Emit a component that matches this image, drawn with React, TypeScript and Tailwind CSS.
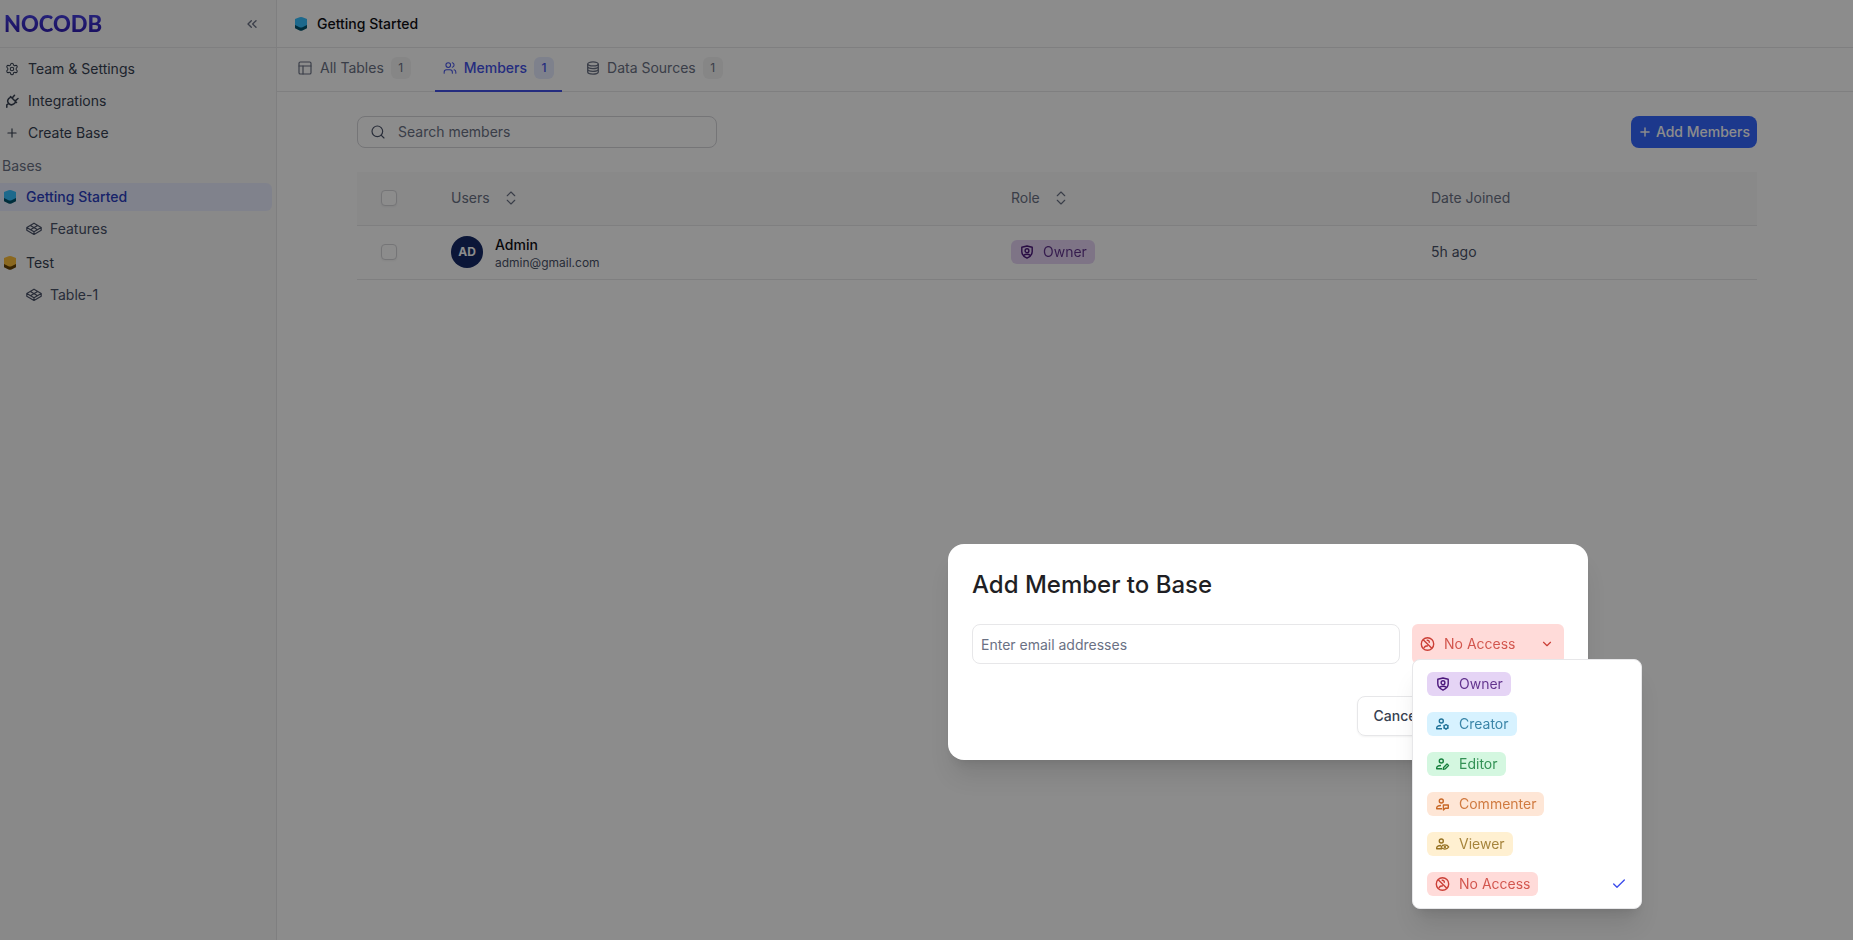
import { useState, type ReactNode } from "react";
import {
  Check,
  ChevronDown,
  ChevronsLeft,
  ChevronsUpDown,
  PanelsTopLeft,
  Plus,
  Search,
  Settings,
  Users,
} from "lucide-react";

type Role = "Owner" | "Creator" | "Editor" | "Commenter" | "Viewer" | "No Access";

const person = (
  <>
    <circle cx="6.3" cy="5" r="2" />
    <path d="M7 12.8H1.700v-.8c0-1.500 2-2.400 4.300-2.500" />
  </>
);

const roleIcons: Record<Role, ReactNode> = {
  Owner: (
    <>
      <path d="M2.800 3.200 8 2l5.200 1.200v4.600c0 3-2.200 5-5.200 6.300-3-1.300-5.200-3.300-5.200-6.300z" />
      <circle cx="8" cy="6.700" r="1.900" />
      <path d="M4.500 11.300c2-1.200 5-1.200 7 0" />
    </>
  ),
  Creator: (
    <>
      {person}
      <circle cx="11" cy="10.800" r="1.900" />
      <path d="M11 7.900v1M11 12.700v1M8.500 9.300l.900.500M12.600 11.800l.900.500M8.500 12.300l.900-.500M12.600 9.800l.900-.500" />
    </>
  ),
  Editor: (
    <>
      {person}
      <path d="m8.200 13.300.4-1.900 3.400-3.300 1.500 1.500-3.400 3.300z" />
    </>
  ),
  Commenter: (
    <>
      {person}
      <path d="M8.400 9h4.900v3.300h-3l-1.900 1.600z" fill="#fee6d6" />
    </>
  ),
  Viewer: (
    <>
      {person}
      <path d="M6 11c1.700-2.800 6-2.800 7.700 0-1.700 2.800-6 2.800-7.700 0z" fill="#fff0d1" />
      <circle cx="9.850" cy="11" r=".5" />
    </>
  ),
  "No Access": (
    <>
      <circle cx="7.500" cy="8" r="6.200" />
      <path d="m3.200 3.700 8.600 8.600M6.700 4.500a1.800 1.800 0 0 1 2.400 2.400M3.800 11.800c.7-1.300 2.100-2 4.200-2" />
    </>
  ),
};

const roleColors: Record<Role, string> = {
  Owner: "bg-[#e5d4f5] text-[#4b177b]",
  Creator: "bg-[#d7f2ff] text-[#207399]",
  Editor: "bg-[#d4f7e0] text-[#17803d]",
  Commenter: "bg-[#fee6d6] text-[#c86827]",
  Viewer: "bg-[#fff0d1] text-[#977223]",
  "No Access": "bg-[#ffdbd9] text-[#cb3f36]",
};

const roles: Role[] = ["Owner", "Creator", "Editor", "Commenter", "Viewer", "No Access"];

function RoleIcon({ role }: { role: Role }) {
  return (
    <svg width="16" height="16" viewBox="0 0 16 16" fill="none" stroke="currentColor" strokeWidth="1.4" strokeLinejoin="round" className="shrink-0">
      {roleIcons[role]}
    </svg>
  );
}

function RoleBadge({ role }: { role: Role }) {
  return (
    <span className={`inline-flex h-6 items-center gap-2 rounded-md px-2 ${roleColors[role]}`}>
      <RoleIcon role={role} />
      <span className="opacity-85">{role}</span>
    </span>
  );
}

function BaseIcon({ top, side }: { top: string; side: string }) {
  return (
    <svg width="12" height="14" viewBox="0 0 12 14" className="shrink-0">
      <path d="M0 4h12v7.200l-4.500 2.300q-1.500.600-3 0L0 11.200z" fill={side} />
      <path d="M0 2 4.500.300q1.500-.500 3 0L12 2v6l-4.500 2.300q-1.500.600-3 0L0 8z" fill={top} />
    </svg>
  );
}

function TableIcon() {
  return (
    <svg width="16" height="14" viewBox="0 0 16 14" fill="none" stroke="currentColor" strokeWidth="1.200" strokeLinejoin="round" className="shrink-0">
      <path d="M8 1.200 15.200 5.500 8 9.800.800 5.500zM.800 5.500v2.700L8 12.500l7.200-4.300V5.500M4.400 3.400l7.200 4.300M11.600 3.400 4.400 7.700M8 9.800v2.700" />
    </svg>
  );
}

function PlugIcon() {
  return (
    <svg width="14" height="14" viewBox="0 0 14 14" fill="none" stroke="currentColor" strokeWidth="1.500" strokeLinecap="round" strokeLinejoin="round" className="shrink-0">
      <path d="m5.500 2.500 6 6M6 3 3.600 4.700a3.700 3.700 0 0 0 5.200 5.200L11 8M7.600 3.400l1.900-2.200M10.800 6.400 13 4.500M3.500 9.600l-1.700 1.200v2.400" />
    </svg>
  );
}

function DataIcon() {
  return (
    <svg width="14" height="14" viewBox="0 0 14 14" fill="none" stroke="currentColor" strokeWidth="1.300" className="shrink-0">
      <ellipse cx="7" cy="2.900" rx="5.300" ry="2" />
      <path d="M1.700 2.900V11c0 2.700 10.600 2.700 10.600 0V2.900M1.700 5.600c0 2.700 10.600 2.700 10.600 0M1.700 8.300c0 2.700 10.600 2.700 10.600 0" />
    </svg>
  );
}

function NavButton({ icon, children }: { icon: ReactNode; children: ReactNode }) {
  return (
    <button className="flex h-8 w-full items-center gap-2 px-1 text-left text-[#374151]">
      <span className="flex w-4 justify-center">{icon}</span>
      {children}
    </button>
  );
}

function Tab({ icon, label, active }: { icon: ReactNode; label: string; active?: boolean }) {
  return (
    <button
      className={`flex h-11 items-center gap-[7px] border-b-2 px-2 pb-0.5 ${
        active ? "border-[#4351e8] font-medium text-[#4351e8]" : "border-transparent text-[#6a7184]"
      }`}
    >
      {icon}
      {label}
      <span className={`flex h-[22px] w-5 items-center justify-center rounded-md text-xs ${active ? "bg-[#e5ebff] font-medium" : "bg-[#f4f4f5]"}`}>
        1
      </span>
    </button>
  );
}

function Sidebar() {
  return (
    <aside className="w-[277px] shrink-0 border-r border-[#e7e7e9] bg-[#f9f9fa]">
      <div className="flex h-12 items-center justify-between border-b border-[#e7e7e9] pr-4 pl-1">
        <span className="bg-linear-to-b from-[#4a45e8] to-[#2b12a5] bg-clip-text font-[Lato] text-[22px] leading-7 font-black text-transparent">NOCODB</span>
        <button aria-label="Collapse sidebar" className="text-[#6a7184]">
          <ChevronsLeft size={16} />
        </button>
      </div>
      <nav className="pt-[5px]">
        <NavButton icon={<Settings size={14} strokeWidth={1.75} />}>Team &amp; Settings</NavButton>
        <NavButton icon={<PlugIcon />}>Integrations</NavButton>
        <NavButton icon={<Plus size={14} />}>Create Base</NavButton>
        <h2 className="flex h-[34px] items-center px-0.5 text-[#6a7184]">Bases</h2>
        <a href="#getting-started" className="mr-1 flex h-7 items-center gap-2.5 rounded-r-md bg-[#e9edff] px-1 font-medium text-[#2c3fc0]">
          <BaseIcon top="#36bfff" side="#00536e" />
          Getting Started
        </a>
        <a href="#features" className="mt-1 flex h-7 items-center gap-2 pl-[26px] text-[#4a5268]">
          <TableIcon />
          Features
        </a>
        <a href="#test" className="mt-1.5 flex h-7 items-center gap-2.5 px-1 text-[#374151]">
          <BaseIcon top="#fcbe3a" side="#654100" />
          Test
        </a>
        <a href="#table-1" className="mt-1 flex h-7 items-center gap-2 pl-[26px] text-[#4a5268]">
          <TableIcon />
          Table-1
        </a>
      </nav>
    </aside>
  );
}

function MembersTable() {
  const checkbox = "block size-4 appearance-none rounded border border-[#d5d5d9] bg-white shadow-xs";

  return (
    <table className="mt-6 w-full table-fixed text-left text-[#6a7184]">
      <colgroup>
        <col className="w-[5%]" />
        <col className="w-[40%]" />
        <col className="w-[30%]" />
        <col />
      </colgroup>
      <thead>
        <tr className="h-[53px] border-b border-[#e7e7e9] bg-[#f9f9fa]">
          <th className="pl-6">
            <input type="checkbox" aria-label="Select all members" className={checkbox} />
          </th>
          <th className="pl-6 font-normal">
            <span className="flex items-center gap-3">
              Users
              <ChevronsUpDown size={18} strokeWidth={1.5} />
            </span>
          </th>
          <th className="pl-6 font-normal">
            <span className="flex items-center gap-3">
              Role
              <ChevronsUpDown size={18} strokeWidth={1.5} />
            </span>
          </th>
          <th className="pl-6 font-normal">Date Joined</th>
        </tr>
      </thead>
      <tbody>
        <tr className="h-[54px] border-b border-[#e7e7e9]">
          <td className="pl-6">
            <input type="checkbox" aria-label="Select Admin" className={checkbox} />
          </td>
          <td className="pl-6">
            <div className="flex items-center gap-3">
              <span className="flex size-8 items-center justify-center rounded-full bg-[#142966] text-xs font-bold text-white">AD</span>
              <div className="pt-1">
                <div className="leading-[18px] font-medium text-[#101015]">Admin</div>
                <div className="text-xs leading-[18px] text-[#4a5268]">admin@gmail.com</div>
              </div>
            </div>
          </td>
          <td className="pl-6">
            <RoleBadge role="Owner" />
          </td>
          <td className="pl-6 text-[#4a5268]">5h ago</td>
        </tr>
      </tbody>
    </table>
  );
}

function AddMemberDialog() {
  const [role, setRole] = useState<Role>("No Access");
  const [open, setOpen] = useState(true);

  const pick = (r: Role) => {
    setRole(r);
    setOpen(false);
  };

  return (
    <div role="dialog" aria-label="Add Member to Base" className="absolute right-[265px] bottom-[180px] w-[640px] rounded-2xl bg-white p-6 shadow-xl">
      <h1 className="text-2xl leading-[34px] font-medium text-[#1f1f24]">Add Member to Base</h1>
      <div className="mt-[22px] flex gap-3">
        <input
          aria-label="Email addresses"
          placeholder="Enter email addresses"
          className="h-10 min-w-0 flex-1 rounded-lg border border-[#e7e7e9] px-2 placeholder:text-[#6a7184]"
        />
        <div className="relative w-[152px]">
          <button
            aria-haspopup="listbox"
            aria-expanded={open}
            onClick={() => setOpen(!open)}
            className={`flex h-10 w-full items-center gap-2 rounded-md px-2 ${roleColors[role]}`}
          >
            <RoleIcon role={role} />
            <span className="opacity-85">{role}</span>
            <ChevronDown size={14} className="mr-0.5 ml-auto" />
          </button>
          {open && (
            <ul role="listbox" aria-label="Role" className="absolute top-[35px] left-0 z-10 w-[230px] rounded-lg border border-[#e7e7e9] bg-white py-1 shadow-xl">
              {roles.map((r) => (
                <li key={r} role="option" aria-selected={r === role}>
                  <button onClick={() => pick(r)} className="flex h-10 w-full items-center justify-between px-3.5">
                    <RoleBadge role={r} />
                    {r === role && <Check size={16} className="text-[#3b4cec]" />}
                  </button>
                </li>
              ))}
            </ul>
          )}
        </div>
      </div>
      <div className="mt-8 flex justify-end gap-2">
        <button className="h-10 rounded-lg border border-[#e7e7e9] px-4 font-medium text-[#374151] shadow-xs">Cancel</button>
        {/* the role menu sits on top of this one while it is open */}
        <button className={`h-10 w-[119px] rounded-lg bg-[#3366ff] font-medium text-white ${open ? "invisible" : ""}`}>Add Member</button>
      </div>
    </div>
  );
}

export default function App() {
  return (
    <div className="relative flex h-screen overflow-hidden bg-white font-[Inter,sans-serif] text-sm">
      <Sidebar />
      <div className="min-w-0 flex-1">
        <header className="flex h-12 items-center gap-2.5 border-b border-[#e7e7e9] px-[18px] font-medium text-[#101015]">
          <BaseIcon top="#36bfff" side="#00536e" />
          Getting Started
        </header>
        <div className="flex h-11 gap-4 border-b border-[#e7e7e9] px-3">
          <Tab icon={<PanelsTopLeft size={16} strokeWidth={1.75} />} label="All Tables" />
          <Tab icon={<Users size={14} strokeWidth={1.75} />} label="Members" active />
          <Tab icon={<DataIcon />} label="Data Sources" />
        </div>
        <div className="pr-4">
          <main className="mx-auto w-full max-w-[1400px] pt-6">
            <div className="flex items-center justify-between">
              <label className="flex h-8 w-[360px] items-center gap-3 rounded-lg border border-[#d5d5d9] px-3">
                <Search size={16} strokeWidth={1.75} className="text-[#4a5268]" />
                <input aria-label="Search members" placeholder="Search members" className="min-w-0 flex-1 placeholder:text-[#6a7184]" />
              </label>
              <button className="flex h-8 items-center gap-1 rounded-lg bg-[#3366ff] px-[7px] font-medium text-white">
                <Plus size={14} strokeWidth={2.5} />
                Add Members
              </button>
            </div>
            <MembersTable />
          </main>
        </div>
      </div>
      <div className="absolute inset-0 bg-black/45">
        <AddMemberDialog />
      </div>
    </div>
  );
}
